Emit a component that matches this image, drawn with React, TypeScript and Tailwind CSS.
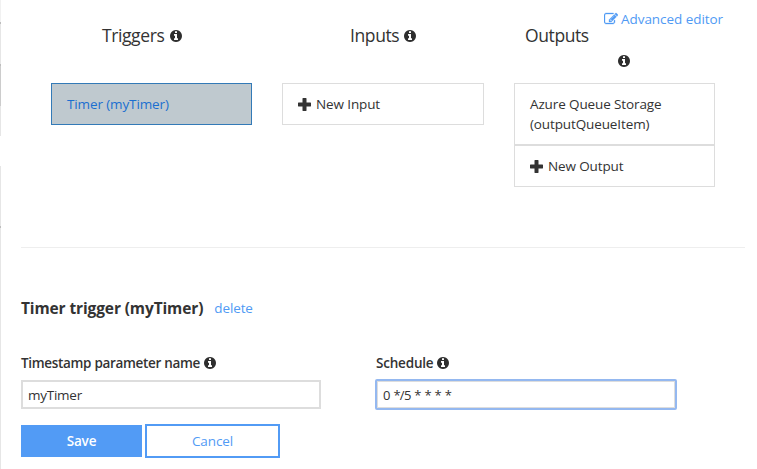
import React from 'react';

const INFO =
  'M1152 1376v-160q0-14-9-23t-23-9h-96v-512q0-14-9-23t-23-9h-320q-14 0-23 9t-9 23v160q0 14 9 23t23 9h96v320h-96q-14 0-23 9t-9 23v160q0 14 9 23t23 9h448q14 0 23-9t9-23zm-128-896v-160q0-14-9-23t-23-9h-192q-14 0-23 9t-9 23v160q0 14 9 23t23 9h192q14 0 23-9t9-23zm640 416q0 209-103 385.5t-279.5 279.5-385.5 103-385.5-103-279.5-279.5-103-385.5 103-385.5 279.5-279.5 385.5-103 385.5 103 279.5 279.5 103 385.5z';
const EDIT =
  'M888 1184l116-116-152-152-116 116v56h96v96h56zm440-720q-16-16-33 1l-350 350q-17 17-1 33t33-1l350-350q17-17 1-33zm80 594v190q0 119-84.5 203.5t-203.5 84.5h-832q-119 0-203.5-84.5t-84.5-203.5v-832q0-119 84.5-203.5t203.5-84.5h832q63 0 117 25 15 7 18 23 3 17-9 29l-49 49q-14 14-32 8-23-6-45-6h-832q-66 0-113 47t-47 113v832q0 66 47 113t113 47h832q66 0 113-47t47-113v-126q0-13 9-22l64-64q15-15 35-7t20 29zm-96-738l288 288-672 672h-288v-288zm444 132l-92 92-288-288 92-92q28-28 68-28t68 28l152 152q28 28 28 68t-28 68z';

function InfoIcon() {
  return (
    <svg viewBox="128 128 1536 1536" className="size-3 shrink-0 fill-[#2e2e2e]">
      <path d={INFO} />
    </svg>
  );
}

function PlusIcon() {
  return (
    <svg viewBox="0 0 13 13" className="size-[13px] shrink-0 fill-[#333]">
      <path d="M4.9 0h3.200q.4 0 .4.4V4.500h4.100q.4 0 .4.4v3.200q0 .4-.4.4H8.500v4.100q0 .4-.4.4H4.900q-.4 0-.4-.4V8.500H.4Q0 8.500 0 8.100V4.900q0-.4.4-.4h4.100V.4q0-.4.4-.4z" />
    </svg>
  );
}

function EdgeStrip() {
  return (
    <div className="flex w-px shrink-0 flex-col">
      <i className="h-[22px] bg-[#f1f1f1]" />
      <i className="h-0.5 bg-[#bdbdbd]" />
      <i className="h-10 bg-[#e6e6e6]" />
      <i className="h-0.5 bg-[#bdbdbd]" />
      <i className="h-10 bg-[#cccccc]" />
      <i className="h-[30px] bg-[#e6e6e6]" />
      <i className="h-[30px] bg-white" />
      <i className="h-[60px] bg-[#e6e6e6]" />
      <i className="h-0.5 bg-[#bdbdbd]" />
      <i className="grow bg-[#e6e6e6]" />
    </div>
  );
}

export default function App() {
  return (
    <div className="flex h-[469px] w-[757px] overflow-hidden bg-white font-['Open_Sans','Noto_Sans',sans-serif] text-[13.5px] leading-5 tracking-[-0.12px] whitespace-nowrap text-[#333]">
      <EdgeStrip />
      <main className="flex w-[756px] flex-col pl-5">
        <section className="flex h-[248px] w-[724px] border-b border-[#eee] pl-[30px]">
          <div className="mr-[30px] w-[201px]">
            <h2 className="flex h-[83px] items-start gap-[6px] pt-[25px] pl-[51px] text-[17.5px] tracking-[-0.4px]">
              <span>Triggers</span>
              <span className="pt-[5px]"><InfoIcon /></span>
            </h2>
            <div className="h-[42px] border border-[#337ab7] bg-[#bfc9cf] px-[15px] py-[10px] text-[#1b6fd0]">Timer (myTimer)</div>
          </div>
          <div className="mr-[30px] w-[202px]">
            <h2 className="flex h-[83px] items-start gap-[5px] pt-[25px] pl-[68px] text-[17.5px] tracking-[-0.4px]">
              <span>Inputs</span>
              <span className="pt-[5px]"><InfoIcon /></span>
            </h2>
            <div className="flex h-[42px] items-center gap-[5px] border border-[#ddd] px-[15px]">
              <PlusIcon />
              <span>New Input</span>
            </div>
          </div>
          <div className="w-[231px]">
            <div className="flex h-[83px]">
              <h2 className="w-[90px] pt-[25px] pl-[11px] text-[17.5px] tracking-[-0.4px]">Outputs</h2>
              <div className="flex flex-col pt-[9px]">
                <a className="flex h-5 items-center gap-[3px] tracking-[-0.05px] text-[#509af4]">
                  <svg viewBox="0 0 1792 1792" className="size-[14px] fill-current stroke-current stroke-[40]"><path d={EDIT} /></svg>
                  <span>Advanced editor</span>
                </a>
                <span className="pt-[26px] pl-[14px]"><InfoIcon /></span>
              </div>
            </div>
            <div className="h-[62px] w-[201px] border border-[#ddd] px-[15px] py-[10px]">
              Azure Queue Storage
              <br />
              (outputQueueItem)
            </div>
            <div className="flex h-[42px] w-[201px] items-center gap-[5px] border border-[#ddd] px-[15px]">
              <PlusIcon />
              <span>New Output</span>
            </div>
          </div>
        </section>
        <div className="flex items-center gap-[11px] pt-[50px]">
          <h3 className="text-[15.5px] font-bold">Timer trigger (myTimer)</h3>
          <a className="text-[#509af4]">delete</a>
        </div>
        <div className="flex gap-[55px] pt-[35px]">
          <div className="w-[300px]">
            <label className="flex items-center gap-1 font-semibold tracking-[-0.32px]">Timestamp parameter name <InfoIcon /></label>
            <div className="mt-[7px] h-[29px] border-2 border-[#ddd] px-[5px] py-[3px] tracking-[-0.25px]">myTimer</div>
          </div>
          <div className="w-[301px]">
            <label className="flex items-center gap-1 font-semibold tracking-[-0.2px]">Schedule <InfoIcon /></label>
            <div className="mt-[6px] -ml-px h-[31px] rounded-[2px] border-2 border-[#94b8f0] px-[6px] py-1 text-[13px] tracking-[-0.7px] [word-spacing:1px] shadow-[inset_0_0_0_1px_#ddd]">0 */5 * * * *</div>
          </div>
        </div>
        <div className="flex gap-[3px] pt-[14px]">
          <button className="mt-px h-8 w-[121px] bg-[#529bf5] font-semibold tracking-[-0.2px] text-white">Save</button>
          <button className="h-[34px] w-[135px] border-2 border-[#529bf5] text-[#529bf5]">Cancel</button>
        </div>
      </main>
    </div>
  );
}
